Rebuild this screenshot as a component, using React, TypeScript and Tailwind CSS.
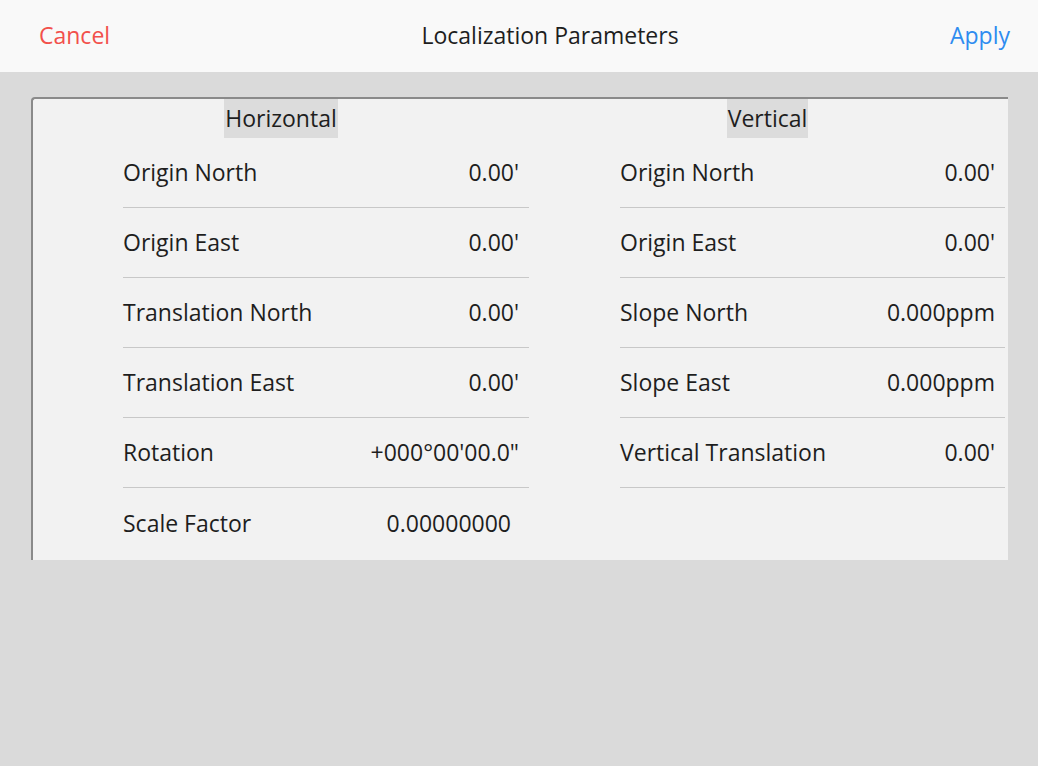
import React from 'react';

const font = { fontFamily: '"Open Sans", "Noto Sans", sans-serif' };

const horizontal = [
  ['Origin North', "0.00'"],
  ['Origin East', "0.00'"],
  ['Translation North', "0.00'"],
  ['Translation East', "0.00'"],
  ['Rotation', '+000°00\'00.0"'],
];

const vertical = [
  ['Origin North', "0.00'"],
  ['Origin East', "0.00'"],
  ['Slope North', '0.000ppm'],
  ['Slope East', '0.000ppm'],
  ['Vertical Translation', "0.00'"],
];

const Row = ({ label, value }: { label: string; value: string }) => (
  <div className="h-[70px] flex items-center justify-between pr-[10px] border-b border-[#c8c8c8] text-[23px] text-[#1e1e1e]">
    <span>{label}</span>
    <span>{value}</span>
  </div>
);

export default function App() {
  return (
    <div className="w-[1038px] h-[766px] bg-[#dadada] flex flex-col" style={font}>
      <div className="h-[72px] bg-[#f9f9f9] flex items-center justify-between px-[39px] pb-[2px] text-[23px]">
        <span className="text-[#f2504b]">Cancel</span>
        <span className="text-[#1e1e1e] ml-[40px]">Localization Parameters</span>
        <span className="text-[#2e8cf0] -mr-[11px]">Apply</span>
      </div>
      <div className="ml-[31px] mt-[25px] w-[977px] h-[463px] bg-[#f2f2f2] border-l-2 border-t-2 border-[#8a8a8a] rounded-tl-[4px]">
        <div className="flex h-[39px] text-[23px] text-[#1e1e1e]">
          <div className="w-[496px] flex justify-center">
            <span className="bg-[#dcdcdc] px-[1px] leading-[39px]">Horizontal</span>
          </div>
          <div className="w-[477px] flex justify-center">
            <span className="bg-[#dcdcdc] px-[1px] leading-[39px]">Vertical</span>
          </div>
        </div>
        <div className="flex">
          <div className="ml-[90px] w-[406px]">
            {horizontal.map(([l, v]) => <Row key={l} label={l} value={v} />)}
            <div className="h-[70px] flex items-center justify-between pr-[18px] text-[23px] text-[#1e1e1e]">
              <span>Scale Factor</span>
              <span>0.00000000</span>
            </div>
          </div>
          <div className="ml-[91px] w-[385px]">
            {vertical.map(([l, v]) => <Row key={l} label={l} value={v} />)}
          </div>
        </div>
      </div>
    </div>
  );
}
